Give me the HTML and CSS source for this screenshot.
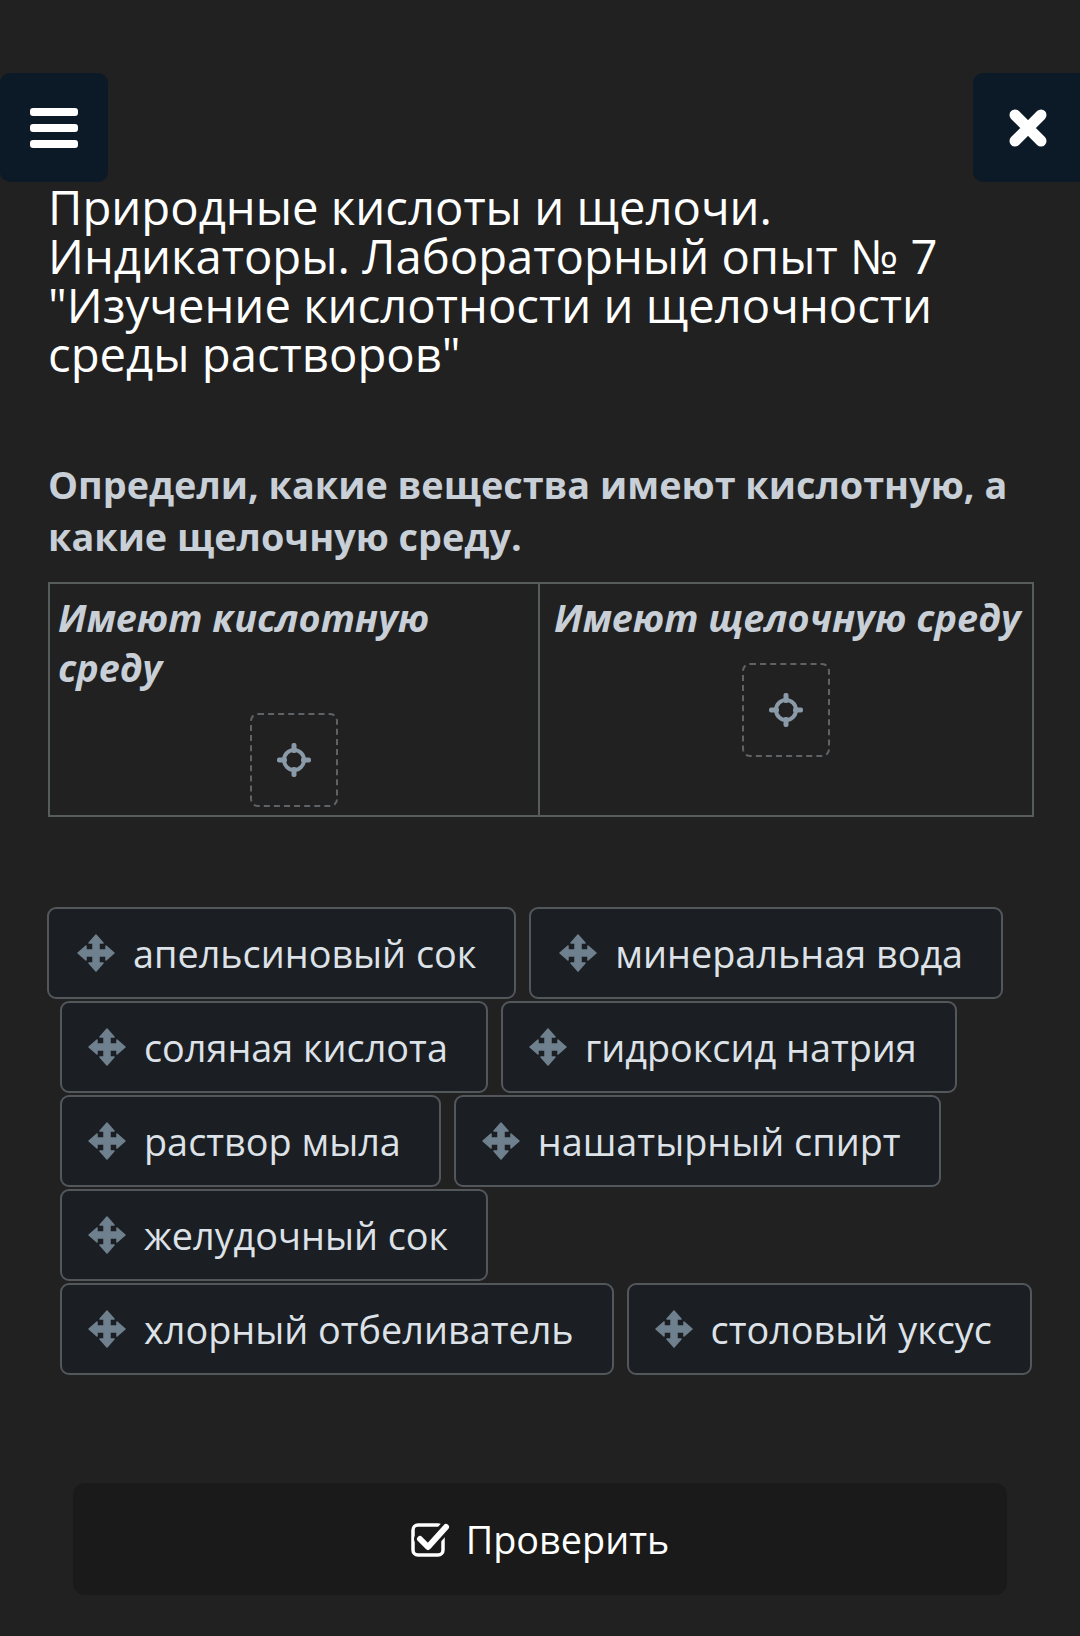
FILE: index.html
```html
<!DOCTYPE html>
<html lang="ru">
<head>
<meta charset="utf-8">
<title>Природные кислоты и щелочи</title>
<link rel="stylesheet" href="styles.css">
</head>
<body>
<div class="page">
  <header class="topbar">
    <button class="menu-btn" aria-label="Меню">
      <svg width="48" height="40" viewBox="0 0 48 40"><rect x="0" y="0" width="48" height="8" rx="3" fill="#fff"/><rect x="0" y="16" width="48" height="8" rx="3" fill="#fff"/><rect x="0" y="32" width="48" height="8" rx="3" fill="#fff"/></svg>
    </button>
    <button class="close-btn" aria-label="Закрыть">
      <svg width="40" height="40" viewBox="0 0 40 40"><path d="M7 7 L33 33 M33 7 L7 33" stroke="#fff" stroke-width="11" stroke-linecap="round"/></svg>
    </button>
  </header>

  <h1 class="title">Природные кислоты и щелочи.<br>Индикаторы. Лабораторный опыт № 7<br>"Изучение кислотности и щелочности<br>среды растворов"</h1>

  <p class="question">Определи, какие вещества имеют кислотную, а<br>какие щелочную среду.</p>

  <div class="table">
    <div class="cell cell-left">
      <div class="cell-head">Имеют кислотную<br>среду</div>
      <div class="drop">
        <svg width="34" height="34" viewBox="0 0 34 34"><circle cx="17" cy="17" r="10" fill="none" stroke="#8a9aa8" stroke-width="4"/><rect x="14.5" y="0" width="5" height="10" rx="2" fill="#8a9aa8"/><rect x="14.5" y="24" width="5" height="10" rx="2" fill="#8a9aa8"/><rect x="0" y="14.5" width="10" height="5" rx="2" fill="#8a9aa8"/><rect x="24" y="14.5" width="10" height="5" rx="2" fill="#8a9aa8"/></svg>
      </div>
    </div>
    <div class="cell cell-right">
      <div class="cell-head">Имеют щелочную среду</div>
      <div class="drop">
        <svg width="34" height="34" viewBox="0 0 34 34"><circle cx="17" cy="17" r="10" fill="none" stroke="#8a9aa8" stroke-width="4"/><rect x="14.5" y="0" width="5" height="10" rx="2" fill="#8a9aa8"/><rect x="14.5" y="24" width="5" height="10" rx="2" fill="#8a9aa8"/><rect x="0" y="14.5" width="10" height="5" rx="2" fill="#8a9aa8"/><rect x="24" y="14.5" width="10" height="5" rx="2" fill="#8a9aa8"/></svg>
      </div>
    </div>
  </div>

  <div class="items">
    <div class="row row-first">
      <div class="item"><svg class="move" viewBox="0 0 38 38"><path d="M19 1 L26 9 L22 9 L22 16 L29 16 L29 12 L37 19 L29 26 L29 22 L22 22 L22 29 L26 29 L19 37 L12 29 L16 29 L16 22 L9 22 L9 26 L1 19 L9 12 L9 16 L16 16 L16 9 L12 9 Z"/></svg><span>апельсиновый сок</span></div>
      <div class="item"><svg class="move" viewBox="0 0 38 38"><path d="M19 1 L26 9 L22 9 L22 16 L29 16 L29 12 L37 19 L29 26 L29 22 L22 22 L22 29 L26 29 L19 37 L12 29 L16 29 L16 22 L9 22 L9 26 L1 19 L9 12 L9 16 L16 16 L16 9 L12 9 Z"/></svg><span>минеральная вода</span></div>
    </div>
    <div class="row">
      <div class="item"><svg class="move" viewBox="0 0 38 38"><path d="M19 1 L26 9 L22 9 L22 16 L29 16 L29 12 L37 19 L29 26 L29 22 L22 22 L22 29 L26 29 L19 37 L12 29 L16 29 L16 22 L9 22 L9 26 L1 19 L9 12 L9 16 L16 16 L16 9 L12 9 Z"/></svg><span>соляная кислота</span></div>
      <div class="item"><svg class="move" viewBox="0 0 38 38"><path d="M19 1 L26 9 L22 9 L22 16 L29 16 L29 12 L37 19 L29 26 L29 22 L22 22 L22 29 L26 29 L19 37 L12 29 L16 29 L16 22 L9 22 L9 26 L1 19 L9 12 L9 16 L16 16 L16 9 L12 9 Z"/></svg><span>гидроксид натрия</span></div>
    </div>
    <div class="row">
      <div class="item"><svg class="move" viewBox="0 0 38 38"><path d="M19 1 L26 9 L22 9 L22 16 L29 16 L29 12 L37 19 L29 26 L29 22 L22 22 L22 29 L26 29 L19 37 L12 29 L16 29 L16 22 L9 22 L9 26 L1 19 L9 12 L9 16 L16 16 L16 9 L12 9 Z"/></svg><span>раствор мыла</span></div>
      <div class="item"><svg class="move" viewBox="0 0 38 38"><path d="M19 1 L26 9 L22 9 L22 16 L29 16 L29 12 L37 19 L29 26 L29 22 L22 22 L22 29 L26 29 L19 37 L12 29 L16 29 L16 22 L9 22 L9 26 L1 19 L9 12 L9 16 L16 16 L16 9 L12 9 Z"/></svg><span>нашатырный спирт</span></div>
    </div>
    <div class="row">
      <div class="item"><svg class="move" viewBox="0 0 38 38"><path d="M19 1 L26 9 L22 9 L22 16 L29 16 L29 12 L37 19 L29 26 L29 22 L22 22 L22 29 L26 29 L19 37 L12 29 L16 29 L16 22 L9 22 L9 26 L1 19 L9 12 L9 16 L16 16 L16 9 L12 9 Z"/></svg><span>желудочный сок</span></div>
    </div>
    <div class="row">
      <div class="item"><svg class="move" viewBox="0 0 38 38"><path d="M19 1 L26 9 L22 9 L22 16 L29 16 L29 12 L37 19 L29 26 L29 22 L22 22 L22 29 L26 29 L19 37 L12 29 L16 29 L16 22 L9 22 L9 26 L1 19 L9 12 L9 16 L16 16 L16 9 L12 9 Z"/></svg><span>хлорный отбеливатель</span></div>
      <div class="item"><svg class="move" viewBox="0 0 38 38"><path d="M19 1 L26 9 L22 9 L22 16 L29 16 L29 12 L37 19 L29 26 L29 22 L22 22 L22 29 L26 29 L19 37 L12 29 L16 29 L16 22 L9 22 L9 26 L1 19 L9 12 L9 16 L16 16 L16 9 L12 9 Z"/></svg><span>столовый уксус</span></div>
    </div>
  </div>

  <div class="check-wrap">
    <button class="check-btn">
      <svg width="40" height="36" viewBox="0 0 40 36"><rect x="2" y="4" width="30" height="30" rx="5" fill="none" stroke="#fff" stroke-width="3.5"/><polyline points="9,18 17,26 35,6" fill="none" stroke="#1a1a1a" stroke-width="12" stroke-linecap="round" stroke-linejoin="round"/><polyline points="9,18 17,26 35,6" fill="none" stroke="#fff" stroke-width="6" stroke-linecap="round" stroke-linejoin="round"/></svg>
      <span>Проверить</span>
    </button>
  </div>
</div>
</body>
</html>
```

FILE: styles.css
```css
* { box-sizing: border-box; }

body {
  margin: 0;
  background: #212121;
  font-family: "Open Sans", "Noto Sans", sans-serif;
  font-size: 37.8px;
}

.page {
  width: 1080px;
  height: 1636px;
  overflow: hidden;
}

.topbar {
  display: flex;
  justify-content: space-between;
  padding-top: 73px;
}

.menu-btn,
.close-btn {
  height: 109px;
  border: none;
  background: #0b1a26;
  display: flex;
  align-items: center;
  justify-content: center;
  padding: 0;
}

.menu-btn {
  width: 108px;
  border-radius: 10px;
}

.close-btn {
  width: 107px;
  border-radius: 10px 0 0 10px;
  justify-content: flex-start;
  padding-left: 35px;
}

.title {
  margin: 0;
  padding: 0 48px;
  font-weight: 400;
  font-size: 47.25px;
  line-height: 49px;
  color: #ffffff;
}

.question {
  margin: 81px 0 0;
  padding: 0 48px;
  font-weight: 700;
  font-size: 37.8px;
  line-height: 52px;
  color: #c8cfd7;
}

.table {
  margin: 19px 0 0 48px;
  width: 986px;
  border: 2px solid #575c5c;
  display: grid;
  grid-template-columns: 490px 1fr;
}

.cell {
  padding: 9px 0 8px;
}

.cell-left {
  border-right: 2px solid #575c5c;
}

.cell-head {
  font-weight: 700;
  font-style: italic;
  font-size: 37.8px;
  line-height: 50px;
  color: #c8cfd7;
  padding-left: 8px;
}

.cell-right .cell-head {
  padding-left: 14px;
}

.drop {
  width: 88px;
  height: 94px;
  margin: 20px auto 0;
  border: 2px dashed #5f6366;
  border-radius: 8px;
  display: flex;
  align-items: center;
  justify-content: center;
}

.items {
  margin-top: 90px;
  padding-left: 47px;
}

.row {
  display: flex;
  gap: 13px;
  margin-top: 2px;
  padding-left: 13px;
}

.row-first {
  gap: 13px;
  margin-top: 0;
  padding-left: 0;
}

.row-first .item {
  padding-left: 28px;
}

.item {
  height: 92px;
  border: 2px solid #52575c;
  border-radius: 9px;
  background: #1b1e22;
  display: flex;
  align-items: center;
  gap: 18px;
  padding: 0 38px 0 26px;
  font-size: 37.8px;
  color: #dde2e8;
  white-space: nowrap;
}

.move {
  width: 38px;
  height: 38px;
  flex: none;
  fill: #6f808e;
  stroke: #6f808e;
  stroke-width: 1.5;
  stroke-linejoin: round;
}

.check-wrap {
  margin-top: 108px;
  padding: 0 73px;
}

.check-btn {
  width: 100%;
  height: 112px;
  border: none;
  border-radius: 12px;
  background: #1a1a1a;
  display: flex;
  align-items: center;
  justify-content: center;
  gap: 15px;
  font-family: "Open Sans", "Noto Sans", sans-serif;
  font-size: 37.8px;
  color: #ffffff;
}
```
